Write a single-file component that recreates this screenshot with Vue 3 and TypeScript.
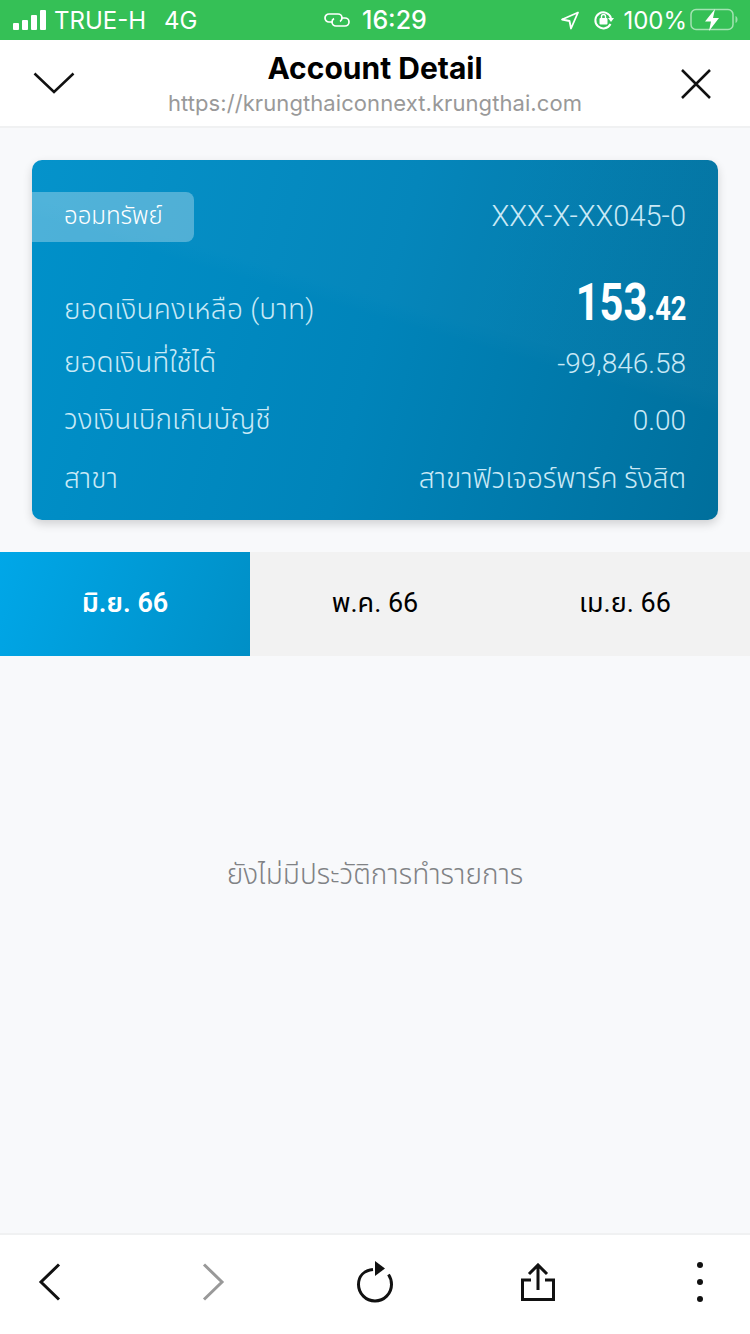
<script setup lang="ts">
const rows = [
  { label: 'ยอดเงินที่ใช้ได้', value: '-99,846.58' },
  { label: 'วงเงินเบิกเกินบัญชี', value: '0.00' },
  { label: 'สาขา', value: 'สาขาฟิวเจอร์พาร์ค รังสิต' },
];
const months = ['มิ.ย. 66', 'พ.ค. 66', 'เม.ย. 66'];
</script>

<template>
  <div class="page">
    <div class="status">
      <div class="status-left">
        <span class="bars"><i class="b1"></i><i class="b2"></i><i class="b3"></i><i class="b4"></i></span>
        <span class="carrier">TRUE-H</span>
        <span class="net">4G</span>
      </div>
      <div class="status-mid">
        <svg width="28" height="16" viewBox="0 0 28 16" fill="none" stroke="#fff" stroke-width="1.700">
          <path d="M9.500 10H6a4 4 0 0 1 0-8h9a4 4 0 0 1 4 4 4 4 0 0 1-2 3.500" />
          <path d="M18.500 6H22a4 4 0 0 1 0 8h-9a4 4 0 0 1-4-4 4 4 0 0 1 2-3.500" />
        </svg>
        <span class="time">16:29</span>
      </div>
      <div class="status-right">
        <svg class="arrow" width="20" height="20" viewBox="0 0 20 20" fill="none" stroke="#fff" stroke-width="1.800" stroke-linejoin="round">
          <path d="M18 2.500 2 9.500l7.500 1.500 1.500 7.500z" />
        </svg>
        <svg width="24" height="22" viewBox="0 0 24 22" fill="none">
          <path d="M18.500 15a8 8 0 1 1 .5-6" stroke="#fff" stroke-width="2" />
          <path d="M16 9h6l-3 4z" fill="#fff" />
          <rect x="7.500" y="9" width="8" height="6.500" rx="1" fill="#fff" />
          <path d="M9.500 9V7.500a2 2 0 0 1 4 0V9" stroke="#fff" stroke-width="1.400" />
        </svg>
        <span class="pct">100%</span>
        <svg width="48" height="24" viewBox="0 0 48 24" fill="none">
          <rect x="1" y="1.500" width="42" height="20" rx="5" stroke="#fff" stroke-opacity=".55" stroke-width="1.500" />
          <path d="M45.500 8v7c1.300-.4 2-1.800 2-3.500s-.7-3.100-2-3.500z" fill="#fff" fill-opacity=".5" />
          <path d="M25 1 15 13.500h6L19 23l10-13h-6z" fill="#fff" />
        </svg>
      </div>
    </div>

    <header class="nav">
      <svg width="42" height="24" viewBox="0 0 42 24" fill="none" stroke="#111" stroke-width="2.500">
        <path d="M1.500 2.500 21 21 40.500 2.500" />
      </svg>
      <div class="nav-title">
        <div class="title">Account Detail</div>
        <div class="url">https://krungthaiconnext.krungthai.com</div>
      </div>
      <svg class="close" width="32" height="32" viewBox="0 0 32 32" fill="none" stroke="#111" stroke-width="2.500">
        <path d="M2 2l28 28M30 2 2 30" />
      </svg>
    </header>

    <main class="content">
      <section class="card">
        <div class="card-top">
          <span class="tag">ออมทรัพย์</span>
          <span class="acc">XXX-X-XX045-0</span>
        </div>
        <div class="balance">
          <span class="balance-label">ยอดเงินคงเหลือ (บาท)</span>
          <span class="amount">153<small>.42</small></span>
        </div>
        <div v-for="r in rows" :key="r.label" class="row">
          <span>{{ r.label }}</span>
          <span>{{ r.value }}</span>
        </div>
      </section>

      <nav class="tabs">
        <div v-for="(m, i) in months" :key="m" class="tab" :class="{ active: i === 0 }">{{ m }}</div>
      </nav>

      <div class="empty">ยังไม่มีประวัติการทำรายการ</div>
    </main>

    <footer class="toolbar">
      <span class="tool">
        <svg width="24" height="38" viewBox="0 0 24 38" fill="none" stroke="#111" stroke-width="3">
          <path d="M21 1.500 3 19l18 17.500" />
        </svg>
      </span>
      <span class="tool">
        <svg width="24" height="38" viewBox="0 0 24 38" fill="none" stroke="#999" stroke-width="3">
          <path d="M3 1.500 21 19 3 36.500" />
        </svg>
      </span>
      <span class="tool">
        <svg width="38" height="42" viewBox="0 0 38 42" fill="none">
          <path d="M17 8.500C8 9.500 2.500 15 2.500 23.500a16.500 16.500 0 0 0 33 0c0-4-1-7-3-10" stroke="#111" stroke-width="3" />
          <path d="M19 0l10 7.500L19 15z" fill="#111" />
        </svg>
      </span>
      <span class="tool">
        <svg width="36" height="38" viewBox="0 0 36 38" fill="none" stroke="#111" stroke-width="3">
          <path d="M18 27V3M9 11l9-9 9 9" />
          <path d="M11 17H2.500v19.500h31V17H25" />
        </svg>
      </span>
      <span class="tool"><span class="dots"><i></i><i></i><i></i></span></span>
    </footer>
  </div>
</template>

<style>
body { background: #f8f9fb; }
</style>

<style scoped>
.page {
  width: 750px;
  height: 1334px;
  display: flex;
  flex-direction: column;
  background: #f8f9fb;
  font-family: Roboto, "Noto Sans Thai", "Noto Sans", sans-serif;
  overflow: hidden;
}
.status {
  height: 40px;
  flex: none;
  background: #35c056;
  color: #fff;
  font-family: Inter, "Liberation Sans", sans-serif;
  font-size: 24px;
  position: relative;
  display: flex;
  align-items: center;
  justify-content: space-between;
  padding: 0 12px 0 13px;
}
.status-left, .status-right, .status-mid { display: flex; align-items: center; }
.bars { display: flex; align-items: flex-end; gap: 3px; height: 20px; margin-right: 8px; }
.bars i { display: block; width: 6px; background: #fff; border-radius: 1px; }
.b1 { height: 7px; }
.b2 { height: 10px; }
.b3 { height: 15px; }
.b4 { height: 20px; }
.net { margin-left: 18px; }
.status-mid { position: absolute; left: 323px; gap: 11px; }
.time { font-size: 25px; font-weight: 500; }
.status-right { gap: 9px; }
.arrow { margin-right: 3px; }
.pct { margin-right: -6px; margin-left: -2px; }
.nav {
  height: 88px;
  flex: none;
  background: #fff;
  border-bottom: 2px solid #f0f1f2;
  position: relative;
  display: flex;
  align-items: center;
  justify-content: space-between;
  padding: 0 38px 0 33px;
  box-sizing: border-box;
}
.close { margin-top: 2px; }
.nav-title {
  position: absolute;
  left: 0;
  right: 0;
  top: 9px;
  text-align: center;
  font-family: Inter, "Liberation Sans", sans-serif;
}
.title { font-size: 30px; font-weight: 700; line-height: 38px; color: #000; }
.url { font-size: 22px; line-height: 32px; color: #999; letter-spacing: .08px; }
.content { flex: 1; display: flex; flex-direction: column; min-height: 0; }
.card {
  margin: 32px 32px 0;
  height: 360px;
  box-sizing: border-box;
  border-radius: 10px;
  color: #c9e9f6;
  font-size: 28px;
  font-weight: 300;
  background:
    linear-gradient(16deg, rgba(255,255,255,0) 54%, rgba(255,255,255,.018) 58%),
    linear-gradient(105deg, #0091ca 0%, #0084ba 50%, #006f9c 100%);
  box-shadow: 0 4px 10px rgba(0, 0, 0, .16);
  padding: 32px 32px 0 0;
}
.card-top { display: flex; align-items: center; justify-content: space-between; }
.tag {
  display: flex;
  align-items: center;
  width: 162px;
  height: 50px;
  box-sizing: border-box;
  padding-left: 32px;
  border-radius: 0 8px 8px 0;
  background: rgba(255, 255, 255, .3);
  color: #fff;
  font-size: 24px;
}
.acc { font-size: 29px; margin-top: -2px; }
.balance, .row {
  display: flex;
  align-items: center;
  justify-content: space-between;
  padding-left: 32px;
}
.balance { margin-top: 36px; height: 60px; padding-top: 4px; box-sizing: border-box; }
.balance-label { letter-spacing: .26px; }
.row { height: 58px; margin-top: -1px; position: relative; top: -3px; }
.row:last-child { top: -1px; }
.amount {
  display: inline-block;
  color: #fff;
  font-size: 52px;
  line-height: 60px;
  font-weight: 700;
  margin-top: -10px;
  transform: scaleX(.8);
  transform-origin: right center;
}
.amount small { font-size: 34px; font-weight: 700; }
.tabs { display: flex; margin-top: 32px; height: 104px; flex: none; background: #f2f2f2; }
.tab {
  flex: 1;
  display: flex;
  align-items: center;
  justify-content: center;
  padding-bottom: 2px;
  font-size: 27px;
  color: #000;
}
.tab.active {
  background: linear-gradient(110deg, #00a7e8, #008fc6);
  color: #fff;
  font-weight: 600;
}
.empty {
  flex: 1;
  padding-top: 199px;
  text-align: center;
  font-size: 28px;
  font-weight: 300;
  line-height: 40px;
  color: #808285;
}
.toolbar {
  height: 99px;
  flex: none;
  background: #fff;
  border-top: 2px solid #f0f1f2;
  display: flex;
  align-items: center;
  justify-content: space-between;
  padding: 0 30px;
}
.tool { width: 40px; display: flex; justify-content: center; align-items: center; margin-top: -5px; }
.dots { display: flex; flex-direction: column; gap: 11px; }
.dots i { display: block; width: 6px; height: 6px; border-radius: 50%; background: #111; }
</style>
